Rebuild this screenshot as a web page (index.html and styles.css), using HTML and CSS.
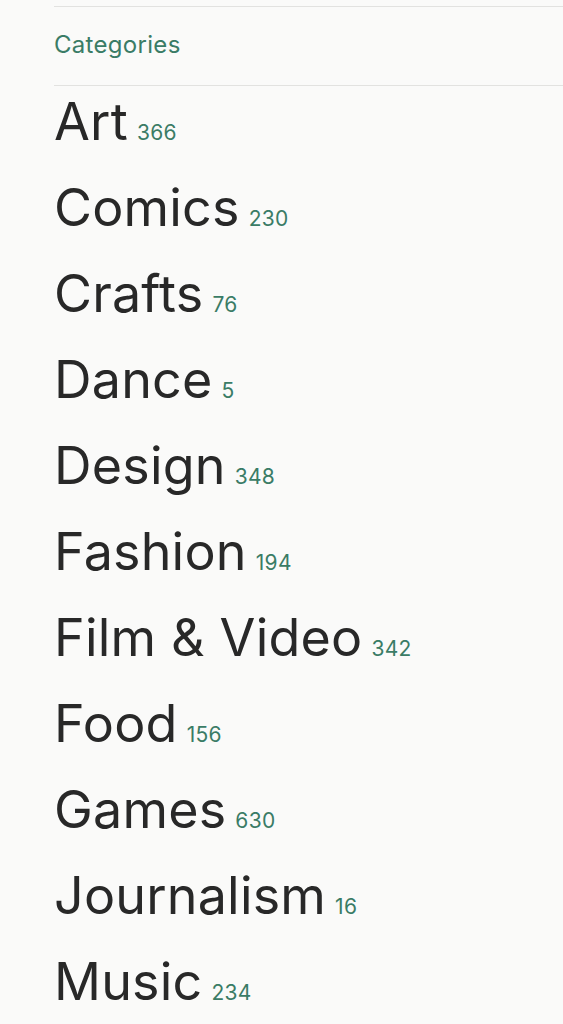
FILE: index.html
```html
<!DOCTYPE html>
<html>
<head>
<meta charset="utf-8">
<link rel="stylesheet" href="styles.css">
</head>
<body>
<section class="panel">
  <h2 class="heading">Categories</h2>
  <ul class="list">
    <li class="item"><span class="name">Art</span><span class="count">366</span></li>
    <li class="item"><span class="name">Comics</span><span class="count">230</span></li>
    <li class="item"><span class="name">Crafts</span><span class="count">76</span></li>
    <li class="item"><span class="name">Dance</span><span class="count">5</span></li>
    <li class="item"><span class="name">Design</span><span class="count">348</span></li>
    <li class="item"><span class="name">Fashion</span><span class="count">194</span></li>
    <li class="item"><span class="name">Film &amp; Video</span><span class="count">342</span></li>
    <li class="item"><span class="name">Food</span><span class="count">156</span></li>
    <li class="item"><span class="name">Games</span><span class="count">630</span></li>
    <li class="item"><span class="name">Journalism</span><span class="count">16</span></li>
    <li class="item"><span class="name">Music</span><span class="count">234</span></li>
  </ul>
</section>
</body>
</html>
```
FILE: styles.css
```css
html, body {
  margin: 0;
  padding: 0;
  background: #fafaf9;
}
body {
  font-family: Inter, "Noto Sans", sans-serif;
  color: #282828;
  overflow: hidden;
  height: 1024px;
}
.panel {
  margin-left: 54px;
  padding-top: 6px;
}
.heading {
  margin: 0;
  border-top: 1px solid #e2e2e0;
  border-bottom: 1px solid #e2e2e0;
  height: 80px;
  box-sizing: border-box;
  display: flex;
  align-items: center;
  font-size: 24px;
  letter-spacing: 0.3px;
  font-weight: 400;
  color: #3a7c66;
  padding-bottom: 3px;
}
.list {
  list-style: none;
  margin: 0;
  padding: 0;
}
.item {
  height: 86px;
  display: flex;
  align-items: baseline;
  line-height: 72px;
}
.name {
  font-size: 52px;
  letter-spacing: 0.2px;
  color: #282828;
}
.count {
  font-size: 21px;
  letter-spacing: 0.3px;
  color: #3a7c66;
  margin-left: 9px;
}
```
